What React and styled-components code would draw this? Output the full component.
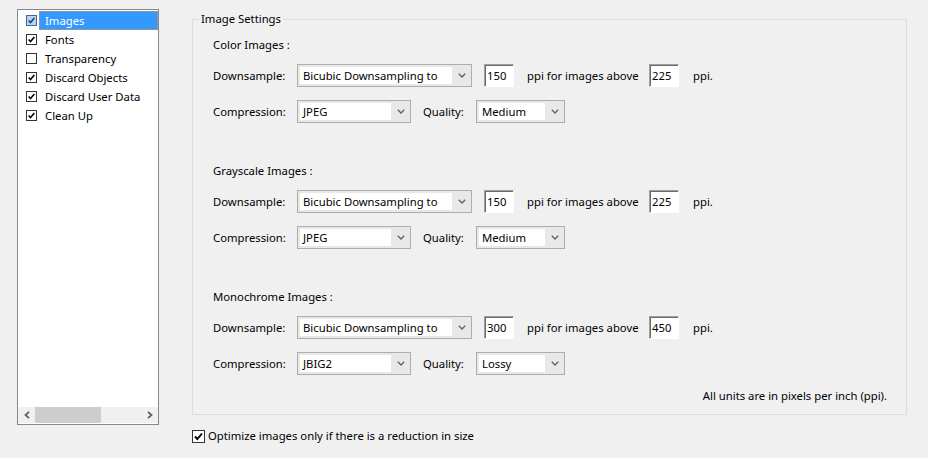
import React from "react";
import styled, { createGlobalStyle } from "styled-components";

const GlobalStyle = createGlobalStyle`
  html, body { margin: 0; padding: 0; background: #f0f0f0; }
  body {
    font-family: "Noto Sans", "Open Sans", sans-serif;
    font-size: 11.3px;
    color: #000;
  }
  * { box-sizing: border-box; }
`;

const Page = styled.div`
  width: 928px;
  height: 458px;
  display: flex;
  align-items: flex-start;
  padding: 9px 0 0 17px;
`;

const ListPanel = styled.div`
  width: 142px;
  height: 416px;
  border: 1px solid #828790;
  background: #fff;
  display: flex;
  flex-direction: column;
  padding-bottom: 1px;
`;

const List = styled.div`
  flex: 1;
  padding-top: 1px;
`;

const ListRow = styled.div`
  height: 19px;
  display: flex;
  align-items: center;
  padding-left: 8px;
`;

const ListText = styled.div`
  flex: 1;
  height: 19px;
  margin-left: 2px;
  padding-left: 6px;
  display: flex;
  align-items: center;
  white-space: nowrap;
  background: ${(p) => (p.$selected ? "#3399ff" : "transparent")};
  color: ${(p) => (p.$selected ? "#fff" : "#000")};
  outline: ${(p) => (p.$selected ? "1px dotted #e8962e" : "none")};
  outline-offset: -1px;
`;

const Box = styled.span`
  width: ${(p) => p.$size}px;
  height: ${(p) => p.$size}px;
  flex: none;
  border: 1px solid ${(p) => (p.$active ? "#3d6aa6" : "#333")};
  background: ${(p) => (p.$active ? "#b8d3f0" : "#fff")};
  display: flex;
  align-items: center;
  justify-content: center;
`;

const ScrollBar = styled.div`
  height: 16px;
  display: flex;
  background: #f0f0f0;
`;

const ScrollArrow = styled.div`
  width: 17px;
  height: 16px;
  display: flex;
  align-items: center;
  justify-content: center;
`;

const ScrollTrack = styled.div`
  flex: 1;
  display: flex;
`;

const ScrollThumb = styled.div`
  width: 66px;
  height: 16px;
  background: #cdcdcd;
`;

const Main = styled.div`
  margin-left: 33px;
  width: 715px;
  display: flex;
  flex-direction: column;
`;

const Group = styled.fieldset`
  margin: 2px 0 0 0;
  border: 1px solid #dcdcdc;
  padding: 10px 19px 10px 20px;
  min-width: 0;
`;

const Legend = styled.legend`
  margin-left: -14px;
  padding: 0 2px;
  line-height: 16px;
`;

const Section = styled.div`
  display: flex;
  flex-direction: column;
  gap: 13px;
  margin-top: ${(p) => (p.$first ? 0 : 40)}px;
`;

const SectionTitle = styled.div`
  line-height: 16px;
  margin-bottom: -2px;
`;

const Row = styled.div`
  height: 23px;
  display: flex;
  align-items: center;
`;

const FieldLabel = styled.div`
  width: ${(p) => p.$w}px;
  margin-left: ${(p) => p.$ml || 0}px;
  flex: none;
  white-space: nowrap;
`;

const SelectBox = styled.div`
  width: ${(p) => p.$w}px;
  height: 23px;
  flex: none;
  border: 1px solid #adadad;
  background: #e8e8e8;
  display: flex;
  align-items: stretch;
  padding: 2px 0 2px 2px;
`;

const SelectValue = styled.div`
  flex: 1;
  background: #fff;
  padding-left: 3px;
  display: flex;
  align-items: center;
  white-space: nowrap;
  overflow: hidden;
`;

const SelectArrow = styled.div`
  width: 19px;
  flex: none;
  display: flex;
  align-items: center;
  justify-content: center;
`;

const NumInput = styled.div`
  width: 30px;
  height: 23px;
  margin-left: ${(p) => p.$ml}px;
  flex: none;
  background: #fff;
  border: 1px solid;
  border-color: #a0a0a0 #fff #fff #a0a0a0;
  box-shadow: inset 1px 1px 0 #696969;
  padding: 0 0 1px 2px;
  display: flex;
  align-items: center;
`;

const Note = styled.div`
  margin-top: 13px;
  text-align: right;
  line-height: 16px;
`;

const OptionRow = styled.label`
  margin-top: 14px;
  display: flex;
  align-items: center;
  gap: 3px;
  line-height: 14px;
`;

const Check = ({ size = 13, active, checked = true }) => (
  <Box $size={size} $active={active}>
    {checked && (
      <svg width={size - 2} height={size - 2} viewBox="0 0 11 11">
        <polyline
          points="2,5.5 4.3,8 9,2.5"
          fill="none"
          stroke={active ? "#1d3f73" : "#000"}
          strokeWidth="1.9"
        />
      </svg>
    )}
  </Box>
);

const Chevron = () => (
  <svg width="8" height="5" viewBox="0 0 8 5">
    <polyline points="0.8,0.8 4,4 7.2,0.8" fill="none" stroke="#606060" strokeWidth="1.3" />
  </svg>
);

const Select = ({ w, value }) => (
  <SelectBox $w={w}>
    <SelectValue>{value}</SelectValue>
    <SelectArrow>
      <Chevron />
    </SelectArrow>
  </SelectBox>
);

const listItems = [
  { label: "Images", checked: true, selected: true },
  { label: "Fonts", checked: true },
  { label: "Transparency", checked: false },
  { label: "Discard Objects", checked: true },
  { label: "Discard User Data", checked: true },
  { label: "Clean Up", checked: true },
];

const sections = [
  { title: "Color Images :", ppi: "150", above: "225", comp: "JPEG", quality: "Medium" },
  { title: "Grayscale Images :", ppi: "150", above: "225", comp: "JPEG", quality: "Medium" },
  { title: "Monochrome Images :", ppi: "300", above: "450", comp: "JBIG2", quality: "Lossy" },
];

export default function App() {
  return (
    <>
      <GlobalStyle />
      <Page>
        <ListPanel>
          <List>
            {listItems.map((it) => (
              <ListRow key={it.label}>
                <Check size={11} checked={it.checked} active={it.selected} />
                <ListText $selected={it.selected}>{it.label}</ListText>
              </ListRow>
            ))}
          </List>
          <ScrollBar>
            <ScrollArrow>
              <svg width="6" height="8" viewBox="0 0 6 8">
                <polyline points="5,0.8 1.5,4 5,7.2" fill="none" stroke="#606060" strokeWidth="1.8" />
              </svg>
            </ScrollArrow>
            <ScrollTrack>
              <ScrollThumb />
            </ScrollTrack>
            <ScrollArrow>
              <svg width="6" height="8" viewBox="0 0 6 8">
                <polyline points="1,0.8 4.5,4 1,7.2" fill="none" stroke="#606060" strokeWidth="1.8" />
              </svg>
            </ScrollArrow>
          </ScrollBar>
        </ListPanel>
        <Main>
          <Group>
            <Legend>Image Settings</Legend>
            {sections.map((s, i) => (
              <Section key={s.title} $first={i === 0}>
                <SectionTitle>{s.title}</SectionTitle>
                <Row>
                  <FieldLabel $w={84}>Downsample:</FieldLabel>
                  <Select w={175} value="Bicubic Downsampling to" />
                  <NumInput $ml={12}>{s.ppi}</NumInput>
                  <FieldLabel $w={122} $ml={13}>ppi for images above</FieldLabel>
                  <NumInput $ml={0}>{s.above}</NumInput>
                  <FieldLabel $w={40} $ml={14}>ppi.</FieldLabel>
                </Row>
                <Row>
                  <FieldLabel $w={84}>Compression:</FieldLabel>
                  <Select w={114} value={s.comp} />
                  <FieldLabel $w={53} $ml={12}>Quality:</FieldLabel>
                  <Select w={89} value={s.quality} />
                </Row>
              </Section>
            ))}
            <Note>All units are in pixels per inch (ppi).</Note>
          </Group>
          <OptionRow>
            <Check size={13} checked />
            <span>Optimize images only if there is a reduction in size</span>
          </OptionRow>
        </Main>
      </Page>
    </>
  );
}
